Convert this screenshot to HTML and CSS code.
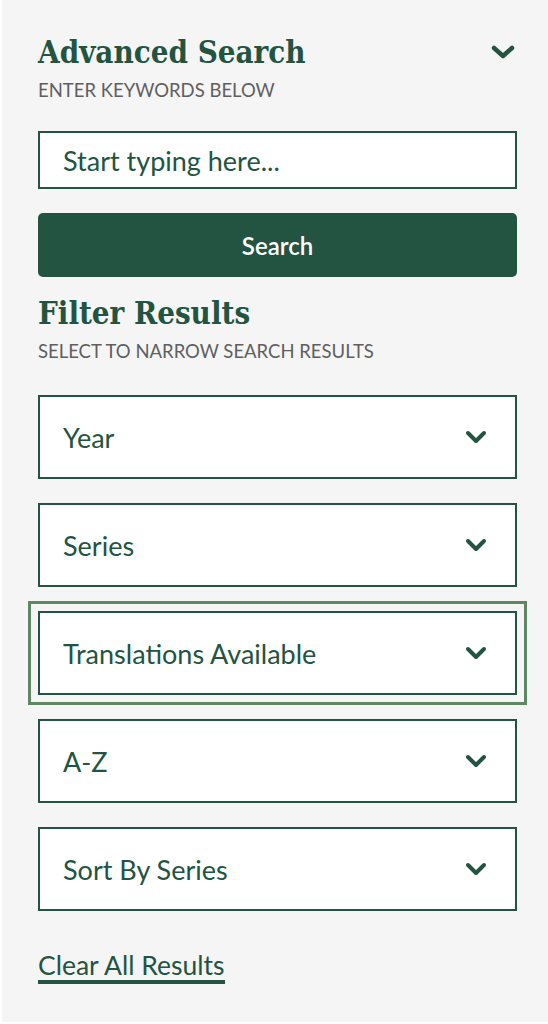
FILE: index.html
```html
<!DOCTYPE html>
<html lang="en">
<head>
    <meta charset="UTF-8">
    <meta name="viewport" content="width=device-width, initial-scale=1.0">
    <title>Advanced Search</title>
    <link rel="stylesheet" href="styles.css">
</head>
<body>
    <aside class="panel">
        <div class="panel-head">
            <h2 class="panel-title">Advanced Search</h2>
            <button class="toggle" aria-label="Collapse">
                <svg width="24" height="14" viewBox="0 0 24 14"><path d="M3 3 L12 11 L21 3" fill="none" stroke="#235441" stroke-width="4.5" stroke-linecap="round" stroke-linejoin="round"/></svg>
            </button>
        </div>
        <p class="panel-sub">ENTER KEYWORDS BELOW</p>
        <input class="search-input" type="text" placeholder="Start typing here...">
        <button class="search-btn">Search</button>

        <h2 class="panel-title">Filter Results</h2>
        <p class="panel-sub">SELECT TO NARROW SEARCH RESULTS</p>

        <div class="filters">
            <button class="filter"><span>Year</span><svg width="22" height="14" viewBox="0 0 22 14"><path d="M3 3 L11 11 L19 3" fill="none" stroke="#235441" stroke-width="4" stroke-linecap="round" stroke-linejoin="round"/></svg></button>
            <button class="filter"><span>Series</span><svg width="22" height="14" viewBox="0 0 22 14"><path d="M3 3 L11 11 L19 3" fill="none" stroke="#235441" stroke-width="4" stroke-linecap="round" stroke-linejoin="round"/></svg></button>
            <button class="filter is-focused"><span>Translations Available</span><svg width="22" height="14" viewBox="0 0 22 14"><path d="M3 3 L11 11 L19 3" fill="none" stroke="#235441" stroke-width="4" stroke-linecap="round" stroke-linejoin="round"/></svg></button>
            <button class="filter"><span>A-Z</span><svg width="22" height="14" viewBox="0 0 22 14"><path d="M3 3 L11 11 L19 3" fill="none" stroke="#235441" stroke-width="4" stroke-linecap="round" stroke-linejoin="round"/></svg></button>
            <button class="filter"><span>Sort By Series</span><svg width="22" height="14" viewBox="0 0 22 14"><path d="M3 3 L11 11 L19 3" fill="none" stroke="#235441" stroke-width="4" stroke-linecap="round" stroke-linejoin="round"/></svg></button>
        </div>

        <a href="#" class="clear-link">Clear All Results</a>
    </aside>
</body>
</html>
```

FILE: styles.css
```css
* {
    margin: 0;
    padding: 0;
    box-sizing: border-box;
}

body {
    background: white;
    font-family: Lato, "Open Sans", sans-serif;
    color: #235441;
}

.panel {
    margin-left: 2px;
    height: 1022px;
    background: #f5f5f5;
    padding: 34px 31px 0 36px;
    display: flex;
    flex-direction: column;
}

.panel-head {
    display: flex;
    justify-content: space-between;
    align-items: center;
}

.panel-title {
    font-family: "DejaVu Serif", "Liberation Serif", serif;
    font-stretch: condensed;
    font-size: 31px;
    line-height: 36px;
    font-weight: bold;
    color: #235441;
}

.toggle {
    background: none;
    border: none;
    padding: 0;
    margin-right: 2px;
    display: flex;
}

.panel-sub {
    font-size: 18.5px;
    line-height: 24px;
    color: #5f5f5f;
    margin-top: 8px;
}

.search-input {
    margin-top: 29px;
    height: 58px;
    border: 2px solid #235441;
    background: white;
    padding: 0 23px;
    font-family: inherit;
    font-size: 27px;
    color: #235441;
    outline: none;
}

.search-input::placeholder {
    color: #235441;
    opacity: 1;
}

.search-btn {
    margin-top: 24px;
    height: 64px;
    border: none;
    border-radius: 5px;
    background: #235441;
    color: white;
    font-family: inherit;
    font-size: 24px;
    font-weight: 600;
    cursor: pointer;
}

.search-btn + .panel-title {
    margin-top: 18px;
}

.filters {
    margin-top: 32px;
    display: flex;
    flex-direction: column;
    gap: 24px;
}

.filter {
    height: 84px;
    border: 2px solid #235441;
    background: white;
    padding: 0 28px 0 23px;
    display: flex;
    justify-content: space-between;
    align-items: center;
    font-family: inherit;
    font-size: 27px;
    color: #235441;
    text-align: left;
    cursor: pointer;
}

.filter.is-focused {
    outline: 3px solid #5e8862;
    outline-offset: 7px;
}

.clear-link {
    margin-top: 39px;
    align-self: flex-start;
    font-size: 26.5px;
    line-height: 30px;
    color: #235441;
    text-decoration: none;
    border-bottom: 4px solid #235441;
}
```
